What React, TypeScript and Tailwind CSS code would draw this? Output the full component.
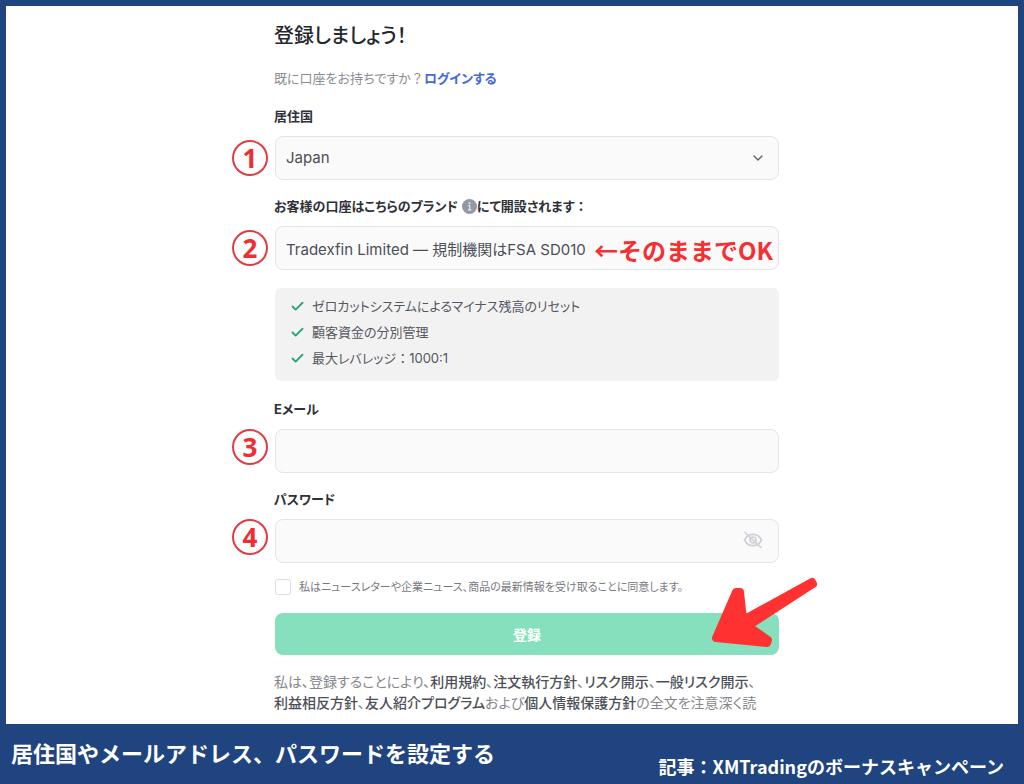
import type { ReactNode } from "react";
import { Check, ChevronDown } from "lucide-react";

const fieldClass =
  "h-11 w-full appearance-none rounded-lg border border-[#e4e5e8] bg-[#fafafb] px-[10px] text-[15px] text-[#4b4e55] outline-none";

function StepNumber({ value, raised = false }: { value: number; raised?: boolean }) {
  return (
    <span
      className={`flex size-9 shrink-0 items-center justify-center rounded-full border-2 border-[#e23b41] font-['Open_Sans',sans-serif] text-[26px] leading-none font-bold text-[#f02d30] ${
        raised ? "self-start" : "self-center"
      }`}
    >
      {value}
    </span>
  );
}

function StepRow({ step, raised, children }: { step: number; raised?: boolean; children: ReactNode }) {
  return (
    <div className="mt-[10px] flex gap-[7px]">
      <StepNumber value={step} raised={raised} />
      <div className="relative min-w-0 flex-1">{children}</div>
    </div>
  );
}

function FieldLabel({ htmlFor, className, children }: { htmlFor: string; className: string; children: ReactNode }) {
  return (
    <label
      htmlFor={htmlFor}
      className={`ml-[42px] flex h-5 items-center text-[13px] leading-5 font-bold whitespace-nowrap text-[#2e3138] ${className}`}
    >
      {children}
    </label>
  );
}

function FullWidth({ children }: { children: ReactNode }) {
  return <span className="[font-feature-settings:normal]">{children}</span>;
}

function Benefit({ children }: { children: ReactNode }) {
  return (
    <li className="flex items-center gap-[7px] text-[13px] leading-[26px] text-[#55585f]">
      <Check className="size-[15px] shrink-0 text-[#2ba37c]" strokeWidth={3} />
      <span>{children}</span>
    </li>
  );
}

function Term({ children }: { children: ReactNode }) {
  return (
    <a href="#" className="font-medium text-[#4d5058]">
      {children}
    </a>
  );
}

function InfoIcon() {
  return (
    <svg viewBox="0 0 14 14" className="ml-1 size-[15px] shrink-0" aria-hidden="true">
      <circle cx="7" cy="7" r="7" fill="#9398a6" />
      <circle cx="7" cy="4" r="1" fill="#e9ebf0" />
      <path d="M5.8 6.2H7.2V10M5.6 10.1H8.6" stroke="#e9ebf0" strokeWidth="1.1" fill="none" />
    </svg>
  );
}

function HiddenEyeIcon() {
  return (
    <svg viewBox="0 0 20 18" className="h-[18px] w-5" fill="none" stroke="#cfd0d6" strokeWidth="1.7" strokeLinecap="round" aria-hidden="true">
      <path d="M1.5 9C3.4 5.2 6.4 3.3 10 3.3S16.6 5.2 18.5 9C16.6 12.8 13.6 14.7 10 14.7S3.4 12.8 1.5 9Z" />
      <circle cx="10" cy="9" r="3" />
      <path d="M2 1.5L18 16.5" />
    </svg>
  );
}

function PointerArrow() {
  return (
    <svg viewBox="0 0 106 70" className="pointer-events-none absolute -top-9 -right-[38px] h-[70px] w-[106px]" aria-hidden="true">
      <path
        d="M5 61L25 15L29 15L32 43L101 5L102 7L37 49L57 63L56 66Z"
        fill="#ff3131"
        stroke="#ff3131"
        strokeWidth="8"
        strokeLinejoin="round"
      />
    </svg>
  );
}

export default function App() {
  return (
    <div className="flex min-h-screen flex-col bg-[#1f4480] font-[Inter,'Noto_Sans_CJK_JP',sans-serif]">
      <main className="mx-[6px] mt-[6px] flex-1 bg-white pt-[14px] pb-[10px]">
        <form
          className="mx-auto max-w-[560px] pr-[13px] [font-feature-settings:'palt']"
          onSubmit={(event) => event.preventDefault()}
        >
          <h1 className="ml-[42px] text-[20px] leading-8 font-medium text-[#24272e]">登録しましょう！</h1>
          <p className="mt-4 ml-[42px] text-[13px] leading-5 text-[#8b8d93]">
            既に口座をお持ちですか<FullWidth>？</FullWidth>
            <a href="#" className="font-bold text-[#4468de]">
              ログインする
            </a>
          </p>

          <FieldLabel htmlFor="country" className="mt-[18px]">
            居住国
          </FieldLabel>
          <StepRow step={1}>
            <select id="country" className={fieldClass} defaultValue="Japan">
              <option>Japan</option>
            </select>
            <ChevronDown className="pointer-events-none absolute top-[14px] right-[13px] size-4 text-[#5c5f66]" />
          </StepRow>

          <FieldLabel htmlFor="brand" className="mt-4">
            お客様の口座はこちらのブランド
            <InfoIcon />
            にて開設されます<FullWidth>：</FullWidth>
          </FieldLabel>
          <StepRow step={2}>
            <input id="brand" readOnly className={fieldClass} value="Tradexfin Limited — 規制機関はFSA SD010" />
            <span className="absolute top-1 right-[6px] font-['Noto_Sans_CJK_JP',sans-serif] text-[24px] leading-10 font-bold whitespace-nowrap text-[#f52f32] [font-feature-settings:normal]">
              ←そのままでOK
            </span>
          </StepRow>

          <ul className="mt-[18px] ml-[43px] rounded-md bg-[#f2f2f3] px-[15px] pt-[5px] pb-[10px]">
            <Benefit>ゼロカットシステムによるマイナス残高のリセット</Benefit>
            <Benefit>顧客資金の分別管理</Benefit>
            <Benefit>
              最大レバレッジ<FullWidth>：</FullWidth>1000:1
            </Benefit>
          </ul>

          <FieldLabel htmlFor="email" className="mt-[18px]">
            Eメール
          </FieldLabel>
          <StepRow step={3} raised>
            <input id="email" type="email" className={fieldClass} />
          </StepRow>

          <FieldLabel htmlFor="password" className="mt-4">
            パスワード
          </FieldLabel>
          <StepRow step={4} raised>
            <input id="password" type="password" className={fieldClass} />
            <button type="button" aria-label="パスワードを表示" className="absolute top-3 right-4">
              <HiddenEyeIcon />
            </button>
          </StepRow>

          <div className="mt-[14px] ml-[43px] flex h-5 items-center gap-2">
            <input id="news" type="checkbox" className="size-4 shrink-0 appearance-none rounded-[3px] border border-[#dcdde1] bg-white" />
            <label htmlFor="news" className="text-[11px] leading-5 text-[#77797f]">
              私はニュースレターや企業ニュース、商品の最新情報を受け取ることに同意します。
            </label>
          </div>

          <div className="relative mt-4 ml-[43px]">
            <button type="submit" className="h-[42px] w-full rounded-lg bg-[#87e0bd] text-[14px] font-bold text-white">
              登録
            </button>
            <PointerArrow />
          </div>

          <p className="mt-4 ml-[42px] text-[14px] leading-[21px] text-[#85878d]">
            私は、登録することにより、<Term>利用規約</Term>、<Term>注文執行方針</Term>、<Term>リスク開示</Term>、
            <Term>一般リスク開示</Term>、<br />
            <Term>利益相反方針</Term>、<Term>友人紹介プログラム</Term>および<Term>個人情報保護方針</Term>の全文を注意深く読
          </p>
        </form>
      </main>

      <footer className="flex h-[60px] items-start justify-between pr-5 pl-[11px] font-['Noto_Sans_CJK_JP',sans-serif] font-bold whitespace-nowrap text-white">
        <p className="pt-3 text-[22px] leading-8">居住国やメールアドレス、パスワードを設定する</p>
        <p className="pt-[26px] text-[18px] leading-8">記事：XMTradingのボーナスキャンペーン</p>
      </footer>
    </div>
  );
}
